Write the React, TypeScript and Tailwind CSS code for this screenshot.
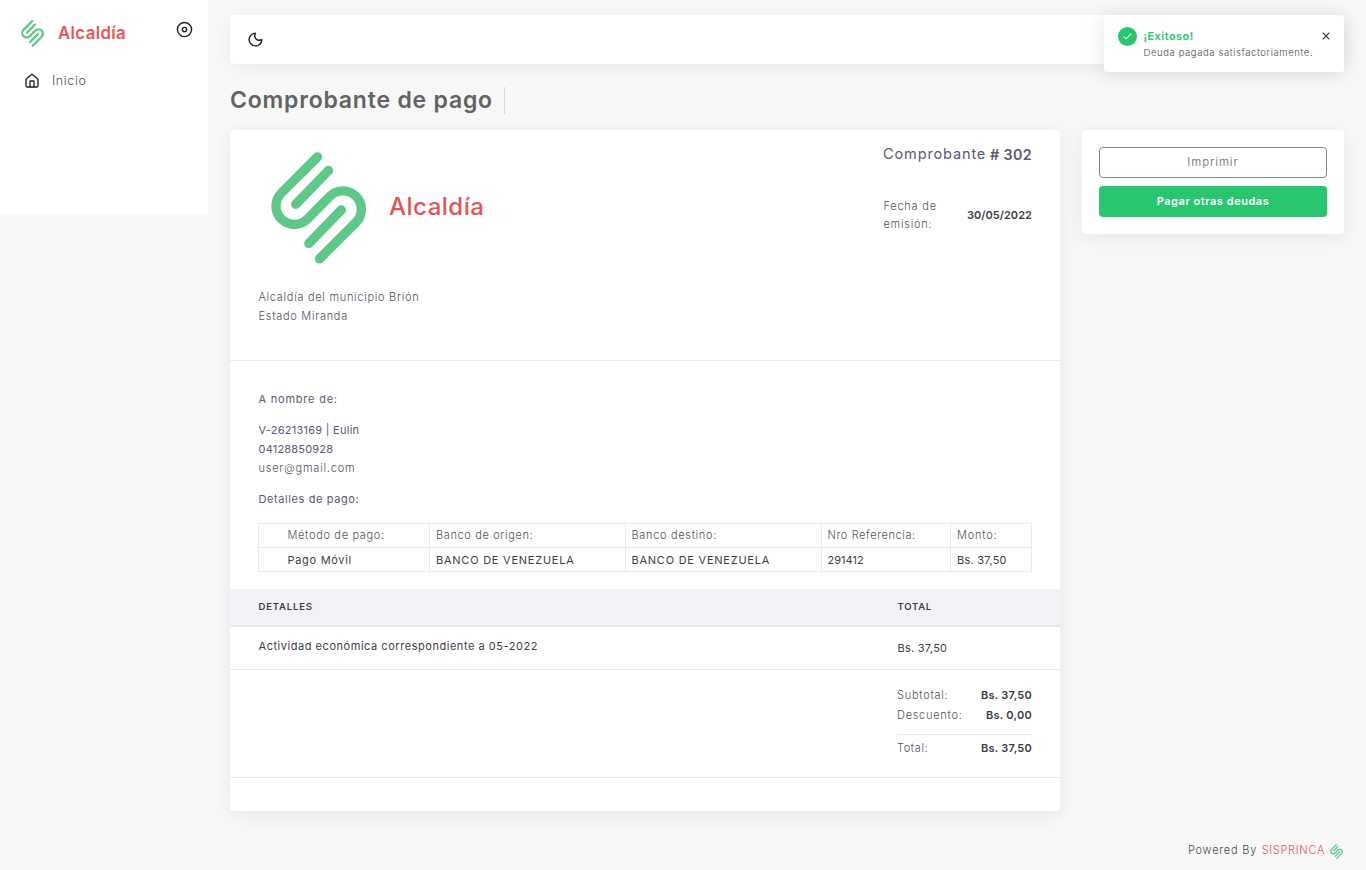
import { Check, House, Moon, X } from "lucide-react";

function Logo({ className }: { className: string }) {
  return (
    <svg viewBox="33 36 284 334" className={className} fill="none" stroke="#5dc888" strokeWidth="28" strokeLinecap="round">
      <path d="M172 50 64 158A55 55 0 0 0 142 236L209 168A55 55 0 0 1 287 246L178 355" />
      <path d="M205 91 107 192M243 209 146 309" />
    </svg>
  );
}

function T({ c, children }: { c: string; children: string }) {
  return <span className={"inline-block whitespace-nowrap " + c}>{children}</span>;
}

const light = "text-[11px] text-[#55535e] font-light";
const mid = "text-[11px] text-[#3f3d48] font-normal";
const purple = "text-[11px] text-[#5e5873] font-normal";
const bold = "text-[11px] text-[#3f3d48] font-semibold";

const cell = "border border-[#ebe9f1] p-0 leading-[23px] ";
const payment = [
  { label: "Método de pago:", labelFit: "tracking-[0.66px]", value: "Pago Móvil", valueFit: "tracking-[0.7px]", box: "w-[171px] pl-[28.5px]" },
  { label: "Banco de origen:", labelFit: "tracking-[0.63px]", value: "BANCO DE VENEZUELA", valueFit: "tracking-[0.76px]", box: "w-[196px] pl-[6px]" },
  { label: "Banco destino:", labelFit: "tracking-[0.67px]", value: "BANCO DE VENEZUELA", valueFit: "tracking-[0.76px]", box: "w-[196px] pl-[5.5px]" },
  { label: "Nro Referencia:", labelFit: "tracking-[0.60px]", value: "291412", valueFit: "tracking-[0.04px]", box: "w-[129px] pl-[5.5px]" },
  { label: "Monto:", labelFit: "tracking-[0.78px]", value: "Bs. 37,50", valueFit: "tracking-[0.25px]", box: "w-[81px] pl-[6px]" },
];

export default function App() {
  return (
    <div className="relative flex h-[870px] w-[1366px] overflow-hidden bg-[#f8f8f8] font-['Inter',sans-serif] text-[11px]">
      <aside className="flex h-[214px] w-[208px] shrink-0 flex-col bg-white">
        <div className="flex h-[48px] items-start pl-[21px] pt-[20px]">
          <Logo className="h-[27px] w-[23px]" />
          <T c="ml-[14px] mt-[1px] text-[16.8px] leading-[25px] font-semibold tracking-[0.38px] text-[#ea5455]">Alcaldía</T>
          <svg viewBox="0 0 24 24" className="mr-[15.5px] ml-auto mt-[1px] size-[17px]" fill="none" stroke="#222" strokeWidth="2">
            <circle cx="12" cy="12" r="10" />
            <circle cx="12" cy="12" r="3" />
          </svg>
        </div>
        <a className="mt-[22px] flex h-[22px] items-center pl-[24px]">
          <House className="size-4 text-[#222]" />
          <T c="ml-[12px] text-[12.6px] font-light tracking-[0.55px] text-[#565360]">Inicio</T>
        </a>
      </aside>
      <main className="flex w-[1136px] flex-col pl-[22px] pt-[15px]">
        <nav className="flex h-[49px] shrink-0 items-center rounded-[4px] bg-white pl-[17px] shadow-[0_4px_20px_0_rgba(0,0,0,0.06)]">
          <Moon className="size-[17px] text-[#222]" strokeWidth={2} />
        </nav>
        <div className="mt-[23px] flex h-[27px] items-center">
          <h2 className="flex h-[27px] w-[275px] items-center border-r border-[#d6dce1]">
            <T c="mt-[-1px] text-[23px] font-semibold tracking-[0.8px] text-[#636363]">Comprobante de pago</T>
          </h2>
        </div>
        <div className="mt-[16px] flex items-start gap-[22px]">
          <section className="h-[681px] w-[830px] rounded-[4px] bg-white shadow-[0_4px_20px_0_rgba(34,41,47,0.08)]">
            <header className="flex h-[231px] justify-between border-b border-[#ebe9f1] px-[28px] pt-[16px]">
              <div>
                <div className="flex h-[123px] items-start pl-[12.5px] pt-[5.5px]">
                  <Logo className="h-[112px] w-[95px]" />
                  <T c="ml-[23.5px] mt-[40px] text-[24px] leading-[30px] font-medium tracking-[0.5px] text-[#e05557]">Alcaldía</T>
                </div>
                <div className="mt-[19px] flex flex-col items-start pl-[0.5px] leading-[19px]">
                  <T c={light + " tracking-[0.7px]"}>Alcaldía del municipio Brión</T>
                  <T c={light + " tracking-[0.71px]"}>Estado Miranda</T>
                </div>
              </div>
              <div className="flex w-[149px] flex-col text-[#5e5873]">
                <h4 className="mt-[-1px] flex justify-between leading-[19px]">
                  <T c="text-[14.6px] font-normal tracking-[0.82px]">Comprobante</T>
                  <T c="text-[14.3px] font-semibold tracking-[0.35px]"># 302</T>
                </h4>
                <div className="mt-[34px] flex items-center justify-between">
                  <div className="flex flex-col items-start pl-[0.5px] leading-[17.5px]">
                    <T c={light + " tracking-[0.77px]"}>Fecha de</T>
                    <T c={light + " tracking-[0.73px]"}>emisión:</T>
                  </div>
                  <T c={bold + " mt-[-1px] tracking-[0.05px]"}>30/05/2022</T>
                </div>
              </div>
            </header>
            <div className="h-[228px] px-[28px] pt-[29px] leading-[19px]">
              <div className="flex flex-col items-start pl-[0.5px]">
                <T c={purple + " tracking-[0.78px]"}>A nombre de:</T>
                <T c={purple + " mt-[12px] tracking-[0.26px]"}>V-26213169 | Eulin</T>
                <T c={purple + " leading-[18px] tracking-[0.2px]"}>04128850928</T>
                <T c={light + " mt-[1px] tracking-[0.78px]"}>user@gmail.com</T>
                <T c={purple + " mt-[12px] tracking-[0.6px]"}>Detalles de pago:</T>
              </div>
              <table className="mt-[14px] table-fixed border-collapse text-left">
                <tbody>
                  <tr className="h-[24px]">
                    {payment.map((p) => (
                      <td key={p.label} className={cell + p.box}><T c={light + " " + p.labelFit}>{p.label}</T></td>
                    ))}
                  </tr>
                  <tr className="h-[24px]">
                    {payment.map((p) => (
                      <td key={p.label} className={cell + p.box}><T c={mid + " relative top-px " + p.valueFit}>{p.value}</T></td>
                    ))}
                  </tr>
                </tbody>
              </table>
            </div>
            <div className="flex h-[38px] items-center border-b-2 border-[#e8e7ee] bg-[#f3f2f7] pl-[28.5px] text-[9.5px] font-semibold text-[#3f3d48]">
              <div className="w-[639px]"><T c="tracking-[0.84px]">DETALLES</T></div>
              <T c="tracking-[0.74px]">TOTAL</T>
            </div>
            <div className="flex h-[43px] border-b border-[#ebe9f1] pl-[28.5px] leading-[19px]">
              <div className="w-[639px] pt-[10px]"><T c={mid + " tracking-[0.54px]"}>Actividad económica correspondiente a 05-2022</T></div>
              <div className="pt-[12px]"><T c={mid + " tracking-[0.25px]"}>Bs. 37,50</T></div>
            </div>
            <div className="flex h-[108px] flex-col items-end border-b border-[#ebe9f1] pr-[28px] pt-[15px] leading-[20px]">
              <div className="flex w-[135px] justify-between">
                <T c={light + " tracking-[0.73px]"}>Subtotal:</T>
                <T c={bold + " tracking-[0.24px]"}>Bs. 37,50</T>
              </div>
              <div className="flex w-[135px] justify-between">
                <T c={light + " tracking-[0.72px]"}>Descuento:</T>
                <T c={bold + " tracking-[0.26px]"}>Bs. 0,00</T>
              </div>
              <div className="mt-[9px] flex w-[135px] justify-between border-t border-[#ebe9f1] pt-[3px]">
                <T c={light + " tracking-[0.6px]"}>Total:</T>
                <T c={bold + " tracking-[0.24px]"}>Bs. 37,50</T>
              </div>
            </div>
          </section>
          <section className="flex h-[104px] w-[262px] flex-col gap-[8px] rounded-[4px] bg-white p-[17px] shadow-[0_4px_20px_0_rgba(34,41,47,0.08)]">
            <button className="flex h-[31px] items-center justify-center rounded-[4px] border border-[#82868b] text-[#82868b]">
              <T c="text-[11.4px] tracking-[0.88px]">Imprimir</T>
            </button>
            <button className="flex h-[31px] items-center justify-center rounded-[4px] bg-[#28c76f] text-white">
              <T c="font-semibold tracking-[0.53px]">Pagar otras deudas</T>
            </button>
          </section>
        </div>
        <footer className="mt-[29px] flex h-[20px] items-center justify-end pt-px text-[#4b4b4b]">
          <T c="font-light tracking-[0.78px]">Powered By</T>
          <T c="ml-[4.5px] font-light tracking-[0.69px] text-[#ea5455]">SISPRINCA</T>
          <Logo className="ml-[5px] mr-[1px] mt-[2px] h-[15px] w-[13px]" />
        </footer>
      </main>
      <div className="absolute left-[1104px] top-[15px] flex h-[57px] w-[240px] rounded-[3px] bg-white pl-[14px] pt-[12px] shadow-[0_2px_20px_0_rgba(34,41,47,0.12)]">
        <span className="flex size-[19px] items-center justify-center rounded-full bg-[#28c76f]">
          <Check className="mb-px size-[11px] text-white" strokeWidth={2.2} />
        </span>
        <div className="ml-[6.5px] flex flex-col items-start">
          <T c="leading-[19px] font-semibold tracking-[0.46px] text-[#28c76f]">¡Exitoso!</T>
          <T c="text-[9.5px] leading-[14px] font-light tracking-[0.6px] text-[#4b4b4b]">Deuda pagada satisfactoriamente.</T>
        </div>
        <X className="absolute left-[216px] top-[15px] size-3 text-[#444]" strokeWidth={2.2} />
      </div>
    </div>
  );
}
